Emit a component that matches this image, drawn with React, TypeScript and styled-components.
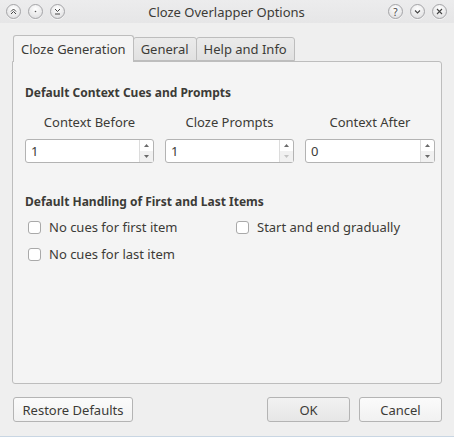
import { FC, useState } from 'react'
import styled, { createGlobalStyle } from 'styled-components'

const GlobalStyle = createGlobalStyle`
    html, body {
        margin: 0;
        padding: 0;
        background: #efefef;
    }
    body {
        font-family: "Noto Sans", "Open Sans", sans-serif;
        font-size: 12px;
        color: #3c3b37;
    }
`

const Window = styled.div`
    width: 454px;
    height: 437px;
    display: flex;
    flex-direction: column;
    background: #efefef;
    box-sizing: border-box;
    border-bottom: 1px solid #c9d6e3;
`

const TitleBar = styled.div`
    height: 23px;
    display: flex;
    align-items: center;
    padding: 0 7px 0 6px;
    background: linear-gradient(#ececed, #e6e6e7);
    .title {
        flex: 1;
        text-align: center;
        font-size: 13px;
        color: #3c3b37;
    }
    .group {
        display: flex;
        gap: 7px;
    }
`

const TitleButton = styled.span`
    flex: 0 0 15px;
    width: 15px;
    height: 15px;
    border-radius: 50%;
    border: 1px solid #a4a4a7;
    background: radial-gradient(circle at 50% 30%, #ffffff, #dadadc);
    box-shadow: 0 1px 0 rgba(255, 255, 255, 0.6);
    display: flex;
    align-items: center;
    justify-content: center;
    box-sizing: border-box;
    color: #444;
    font-size: 10px;
    line-height: 1;
`

const Body = styled.div`
    flex: 1;
    display: flex;
    flex-direction: column;
    padding: 11px 12px 0 12px;
`

const TabBar = styled.div`
    display: flex;
    align-items: flex-end;
    padding-left: 1px;
    height: 27px;
`

const Tab = styled.div<{ $active?: boolean }>`
    height: ${p => (p.$active ? 27 : 24)}px;
    padding: 0 7px;
    display: flex;
    align-items: center;
    box-sizing: border-box;
    border: 1px solid #bdbdbd;
    border-bottom: ${p => (p.$active ? 'none' : '1px solid #bdbdbd')};
    border-radius: 3px 3px 0 0;
    background: ${p => (p.$active ? '#f4f4f4' : 'linear-gradient(#ebebeb, #e1e1e1)')};
    margin-right: -1px;
    position: relative;
    z-index: ${p => (p.$active ? 2 : 1)};
    margin-bottom: ${p => (p.$active ? '-1px' : '0')};
    font-size: 13px;
    color: #3c3b37;
    cursor: default;
`

const Pane = styled.div`
    height: 323px;
    box-sizing: border-box;
    border: 1px solid #bdbdbd;
    border-radius: 0 3px 3px 3px;
    background: #f4f4f4;
    padding: 23px 8px 0 12px;
`

const SectionTitle = styled.div`
    font-weight: bold;
    font-size: 12px;
    height: 16px;
    line-height: 16px;
`

const SpinGrid = styled.div`
    display: grid;
    grid-template-columns: 129px 129px 130px;
    column-gap: 11px;
    margin-top: 12px;
    margin-bottom: 31px;
`

const Field = styled.div`
    display: flex;
    flex-direction: column;
    label {
        text-align: center;
        font-size: 13px;
        height: 18px;
        line-height: 18px;
        margin-bottom: 8px;
    }
`

const SpinBox = styled.div`
    height: 24px;
    display: flex;
    box-sizing: border-box;
    border: 1px solid #b3b3b3;
    border-radius: 3px;
    background: #fff;
    input {
        flex: 1;
        min-width: 0;
        border: none;
        outline: none;
        background: transparent;
        padding: 0 5px;
        font: inherit;
        font-size: 13px;
        color: #3c3b37;
    }
`

const Arrows = styled.div`
    width: 13px;
    display: flex;
    flex-direction: column;
    border-left: 1px solid #dcdcdc;
    span {
        flex: 1;
        display: flex;
        align-items: center;
        justify-content: center;
    }
    span:last-child {
        background: #f1f1f1;
    }
`

const Checks = styled.div`
    display: grid;
    grid-template-columns: 208px 1fr;
    row-gap: 9px;
    margin-top: 8px;
    padding-left: 3px;
`

const CheckRow = styled.label`
    display: flex;
    align-items: center;
    gap: 8px;
    font-size: 13px;
    height: 18px;
`

const Box = styled.span`
    width: 13px;
    height: 13px;
    box-sizing: border-box;
    border: 1px solid #a9a9a9;
    border-radius: 3px;
    background: #fff;
`

const Footer = styled.div`
    display: flex;
    align-items: center;
    margin-top: 13px;
    padding-left: 1px;
    gap: 9px;
    .spacer {
        flex: 1;
    }
`

const Button = styled.button<{ $width: number; $default?: boolean }>`
    width: ${p => p.$width}px;
    height: 25px;
    box-sizing: border-box;
    border: 1px solid #b4b4b4;
    border-radius: 3px;
    background: ${p => (p.$default ? 'linear-gradient(#f2f2f2, #e6e6e6)' : 'linear-gradient(#fbfbfb, #f1f1f1)')};
    font-family: inherit;
    font-size: 13px;
    color: #3c3b37;
    padding: 0;
`

const Chevron: FC<{ up?: boolean; dim?: boolean }> = ({ up, dim }) => (
    <svg width="5" height="3" viewBox="0 0 5 3">
        <path d={up ? 'M0 3 L2.5 0 L5 3 Z' : 'M0 0 L2.5 3 L5 0 Z'} fill={dim ? '#c4c4c4' : '#6a6a6a'} />
    </svg>
)

const Spin: FC<{ value: string; downDim?: boolean }> = ({ value, downDim }) => {
    const [v, setV] = useState(value)
    return <SpinBox>
        <input value={v} onChange={e => setV(e.target.value)} />
        <Arrows>
            <span><Chevron up /></span>
            <span><Chevron dim={downDim} /></span>
        </Arrows>
    </SpinBox>
}

const Check: FC<{ label: string }> = ({ label }) => (
    <CheckRow>
        <Box />
        <span>{label}</span>
    </CheckRow>
)

const App: FC = () => {
    return <Window>
        <GlobalStyle />
        <TitleBar>
            <div className="group">
                <TitleButton>
                    <svg width="7" height="7" viewBox="0 0 7 7"><path d="M1 3.5 L3.5 1 L6 3.5 M1 6 L3.5 3.5 L6 6" stroke="#444" fill="none" strokeWidth="1" /></svg>
                </TitleButton>
                <TitleButton>
                    <svg width="3" height="3" viewBox="0 0 3 3"><circle cx="1.5" cy="1.5" r="0.8" fill="#555" /></svg>
                </TitleButton>
                <TitleButton>
                    <svg width="7" height="7" viewBox="0 0 7 7"><path d="M1 1 L3.5 3.5 L6 1 M1 6 H6" stroke="#444" fill="none" strokeWidth="1" /></svg>
                </TitleButton>
            </div>
            <span className="title">Cloze Overlapper Options</span>
            <div className="group">
                <TitleButton>?</TitleButton>
                <TitleButton>
                    <svg width="7" height="5" viewBox="0 0 7 5"><path d="M1 1.5 L3.5 4 L6 1.5" stroke="#444" fill="none" strokeWidth="1.1" /></svg>
                </TitleButton>
                <TitleButton>
                    <svg width="7" height="7" viewBox="0 0 7 7"><path d="M1 1 L6 6 M6 1 L1 6" stroke="#444" fill="none" strokeWidth="1.1" /></svg>
                </TitleButton>
            </div>
        </TitleBar>
        <Body>
            <TabBar>
                <Tab $active>Cloze Generation</Tab>
                <Tab>General</Tab>
                <Tab>Help and Info</Tab>
            </TabBar>
            <Pane>
                <SectionTitle>Default Context Cues and Prompts</SectionTitle>
                <SpinGrid>
                    <Field>
                        <label>Context Before</label>
                        <Spin value="1" />
                    </Field>
                    <Field>
                        <label>Cloze Prompts</label>
                        <Spin value="1" downDim />
                    </Field>
                    <Field>
                        <label>Context After</label>
                        <Spin value="0" />
                    </Field>
                </SpinGrid>
                <SectionTitle>Default Handling of First and Last Items</SectionTitle>
                <Checks>
                    <Check label="No cues for first item" />
                    <Check label="Start and end gradually" />
                    <Check label="No cues for last item" />
                </Checks>
            </Pane>
            <Footer>
                <Button $width={120}>Restore Defaults</Button>
                <span className="spacer" />
                <Button $width={83} $default>OK</Button>
                <Button $width={83}>Cancel</Button>
            </Footer>
        </Body>
    </Window>
}

export default App
